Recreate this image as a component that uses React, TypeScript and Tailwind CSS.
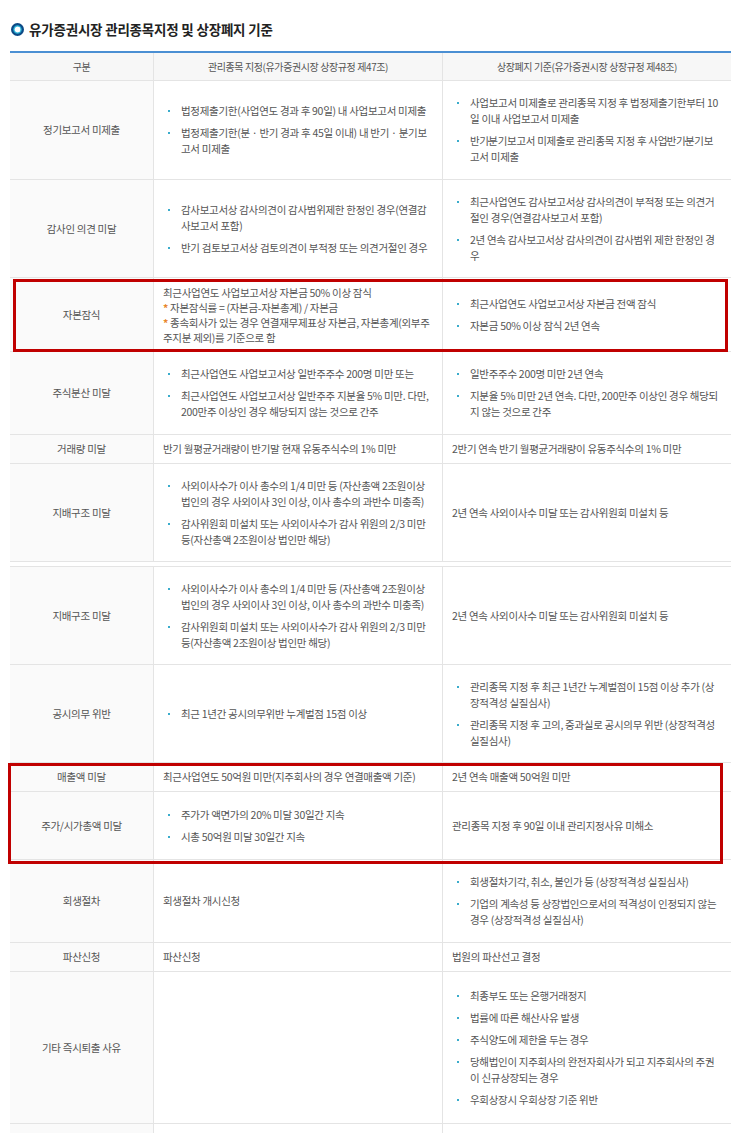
import React from "react";

type Cell = React.ReactNode[] | string | null;

type Row = {
  label: string;
  h: string;
  mid: Cell;
  right: Cell;
};

const font = {
  fontFamily: '"Noto Sans CJK KR", "Noto Sans", sans-serif',
};

// narrow middle dot, the source squeezes it between syllables
const Dot = () => <span className="mx-[-3px]">·</span>;

// 지배구조 row shows up twice in the capture
const governance: Row = {
  label: "지배구조 미달",
  h: "h-[98px]",
  mid: [
    "사외이사수가 이사 총수의 1/4 미만 등 (자산총액 2조원이상 법인의 경우 사외이사 3인 이상, 이사 총수의 과반수 미충족)",
    "감사위원회 미설치 또는 사외이사수가 감사 위원의 2/3 미만 등(자산총액 2조원이상 법인만 해당)",
  ],
  right: "2년 연속 사외이사수 미달 또는 감사위원회 미설치 등",
};

const topRows: Row[] = [
  {
    label: "정기보고서 미제출",
    h: "h-[99px]",
    mid: [
      "법정제출기한(사업연도 경과 후 90일) 내 사업보고서 미제출",
      "법정제출기한(분 · 반기 경과 후 45일 이내) 내 반기 · 분기보고서 미제출",
    ],
    right: [
      "사업보고서 미제출로 관리종목 지정 후 법정제출기한부터 10일 이내 사업보고서 미제출",
      <>
        반기<Dot />분기보고서 미제출로 관리종목 지정 후 사업<Dot />반기<Dot />분기보고서 미제출
      </>,
    ],
  },
  {
    label: "감사인 의견 미달",
    h: "h-[98px]",
    mid: [
      "감사보고서상 감사의견이 감사범위제한 한정인 경우(연결감사보고서 포함)",
      "반기 검토보고서상 검토의견이 부적정 또는 의견거절인 경우",
    ],
    right: [
      "최근사업연도 감사보고서상 감사의견이 부적정 또는 의견거절인 경우(연결감사보고서 포함)",
      "2년 연속 감사보고서상 감사의견이 감사범위 제한 한정인 경우",
    ],
  },
];

const midRows: Row[] = [
  {
    label: "주식분산 미달",
    h: "h-[83px]",
    mid: [
      "최근사업연도 사업보고서상 일반주주수  200명 미만 또는",
      "최근사업연도 사업보고서상 일반주주 지분율 5% 미만. 다만, 200만주 이상인 경우 해당되지 않는 것으로 간주",
    ],
    right: [
      "일반주주수 200명 미만 2년 연속",
      "지분율 5% 미만 2년 연속. 다만, 200만주 이상인 경우 해당되지 않는 것으로 간주",
    ],
  },
  {
    label: "거래량 미달",
    h: "h-[29px]",
    mid: "반기 월평균거래량이 반기말 현재 유동주식수의 1% 미만",
    right: "2반기 연속 반기 월평균거래량이 유동주식수의 1% 미만",
  },
  governance,
];

const laterRows: Row[] = [
  {
    label: "공시의무 위반",
    h: "h-[98px]",
    mid: ["최근 1년간 공시의무위반 누계벌점 15점 이상"],
    right: [
      "관리종목 지정 후 최근 1년간 누계벌점이 15점 이상 추가 (상장적격성 실질심사)",
      "관리종목 지정 후 고의, 중과실로 공시의무 위반 (상장적격성 실질심사)",
    ],
  },
];

const boxedRows: Row[] = [
  {
    label: "매출액 미달",
    h: "h-[29px]",
    mid: "최근사업연도 50억원 미만(지주회사의 경우 연결매출액 기준)",
    right: "2년 연속 매출액 50억원 미만",
  },
  {
    label: "주가/시가총액 미달",
    h: "h-[68px]",
    mid: ["주가가 액면가의 20% 미달 30일간 지속", "시총 50억원 미달 30일간 지속"],
    right: "관리종목 지정 후 90일 이내 관리지정사유 미해소",
  },
];

const bottomRows: Row[] = [
  {
    label: "회생절차",
    h: "h-[83px]",
    mid: "회생절차 개시신청",
    right: [
      "회생절차기각, 취소, 불인가 등 (상장적격성 실질심사)",
      "기업의 계속성 등 상장법인으로서의 적격성이 인정되지 않는 경우 (상장적격성 실질심사)",
    ],
  },
  {
    label: "파산신청",
    h: "h-[29px]",
    mid: "파산신청",
    right: "법원의 파산선고 결정",
  },
  {
    label: "기타 즉시퇴출 사유",
    h: "h-[152px]",
    mid: null,
    right: [
      "최종부도 또는 은행거래정지",
      "법률에 따른 해산사유 발생",
      "주식양도에 제한을 두는 경우",
      "당해법인이 지주회사의 완전자회사가 되고 지주회사의 주권이 신규상장되는 경우",
      "우회상장시 우회상장 기준 위반",
    ],
  },
  {
    label: "",
    h: "h-[40px]",
    mid: null,
    right: null,
  },
];

const CellBody = ({ value }: { value: Cell }) => {
  if (value === null) return null;
  if (typeof value === "string") return <p className="pl-[9px] pr-[8px]">{value}</p>;
  return (
    <ul className="flex flex-col gap-[6px] pl-[14px] pr-[10px]">
      {value.map((item, i) => (
        <li key={i} className="flex">
          <span className="mt-[7px] mr-[11px] h-[2px] w-[2px] shrink-0 bg-[#3aaccc]" />
          <span className="break-all">{item}</span>
        </li>
      ))}
    </ul>
  );
};

const TableRow = ({ row }: { row: Row }) => (
  <div className={`grid grid-cols-[144px_289px_288px] border-b border-[#e4e4e4] ${row.h}`}>
    <div className="flex items-center justify-center border-r border-[#e4e4e4] bg-[#fafafa]">
      {row.label}
    </div>
    <div className="flex items-center border-r border-[#e4e4e4]">
      <div className="w-full">
        <CellBody value={row.mid} />
      </div>
    </div>
    <div className="flex items-center">
      <div className="w-full">
        <CellBody value={row.right} />
      </div>
    </div>
  </div>
);

const CapitalRow = () => (
  <div className="relative grid h-[74px] grid-cols-[144px_289px_288px] border-b border-[#e4e4e4]">
    <div className="flex items-center justify-center border-r border-[#e4e4e4] bg-[#fafafa]">
      자본잠식
    </div>
    <div className="flex items-center border-r border-[#e4e4e4] pl-[9px] pr-[8px] leading-[15px]">
      <div className="break-all">
        <p>최근사업연도 사업보고서상 자본금 50% 이상 잠식</p>
        <p>
          <span className="font-bold text-[#e8862a]">*</span> 자본잠식률 = (자본금-자본총계) / 자본금
        </p>
        <p>
          <span className="font-bold text-[#e8862a]">*</span> 종속회사가 있는 경우 연결재무제표상 자본금, 자본총계(외부주주지분 제외)를 기준으로 함
        </p>
      </div>
    </div>
    <div className="flex items-center">
      <div className="w-full">
        <CellBody value={["최근사업연도 사업보고서상 자본금 전액 잠식", "자본금 50% 이상 잠식 2년 연속"]} />
      </div>
    </div>
    <div className="pointer-events-none absolute top-[1px] right-[3px] bottom-[-1px] left-[3px] border-[3px] border-[#c00000]" />
  </div>
);

const TitleIcon = () => (
  <svg width="13" height="13" viewBox="0 0 13 13">
    <circle cx="6.5" cy="6.5" r="5" fill="none" stroke="#0d4a86" strokeWidth="3" />
    <circle cx="6.5" cy="6.5" r="3.6" fill="none" stroke="#27b2d8" strokeWidth="1.3" />
  </svg>
);

export default function App() {
  return (
    <div
      className="min-h-screen w-[743px] bg-white px-[10px] pt-[19px] text-[10.5px] leading-[16px] tracking-[-0.3px] text-[#555]"
      style={font}
    >
      <div className="flex h-[20px] items-center gap-[5px] pl-[1px]">
        <TitleIcon />
        <h1 className="text-[13.5px] font-bold tracking-[-0.2px] text-[#222]">
          유가증권시장 관리종목지정 및 상장폐지 기준
        </h1>
      </div>

      <div className="mt-[12px] w-[721px] border-t-2 border-[#4b8fd3]">
        <div className="grid h-[28px] grid-cols-[144px_289px_288px] border-b border-[#e4e4e4] bg-[#f7f7f7] text-[10px] tracking-[-0.4px]">
          <div className="flex items-center justify-center border-r border-[#e4e4e4]">구분</div>
          <div className="flex items-center justify-center border-r border-[#e4e4e4]">
            관리종목 지정(유가증권시장 상장규정 제47조)
          </div>
          <div className="flex items-center justify-center">상장폐지 기준(유가증권시장 상장규정 제48조)</div>
        </div>

        {topRows.map((row, i) => (
          <TableRow key={`top-${i}`} row={row} />
        ))}
        <CapitalRow />
        {midRows.map((row, i) => (
          <TableRow key={`mid-${i}`} row={row} />
        ))}
        <div className="h-[5px] border-b border-[#e4e4e4]" />
        <TableRow row={governance} />
        {laterRows.map((row, i) => (
          <TableRow key={`late-${i}`} row={row} />
        ))}

        <div className="relative">
          {boxedRows.map((row, i) => (
            <TableRow key={`box-${i}`} row={row} />
          ))}
          <div className="pointer-events-none absolute top-0 right-[8px] bottom-[-4px] left-[-2px] border-[3px] border-[#c00000]" />
        </div>

        {bottomRows.map((row, i) => (
          <TableRow key={`bot-${i}`} row={row} />
        ))}
      </div>
    </div>
  );
}
